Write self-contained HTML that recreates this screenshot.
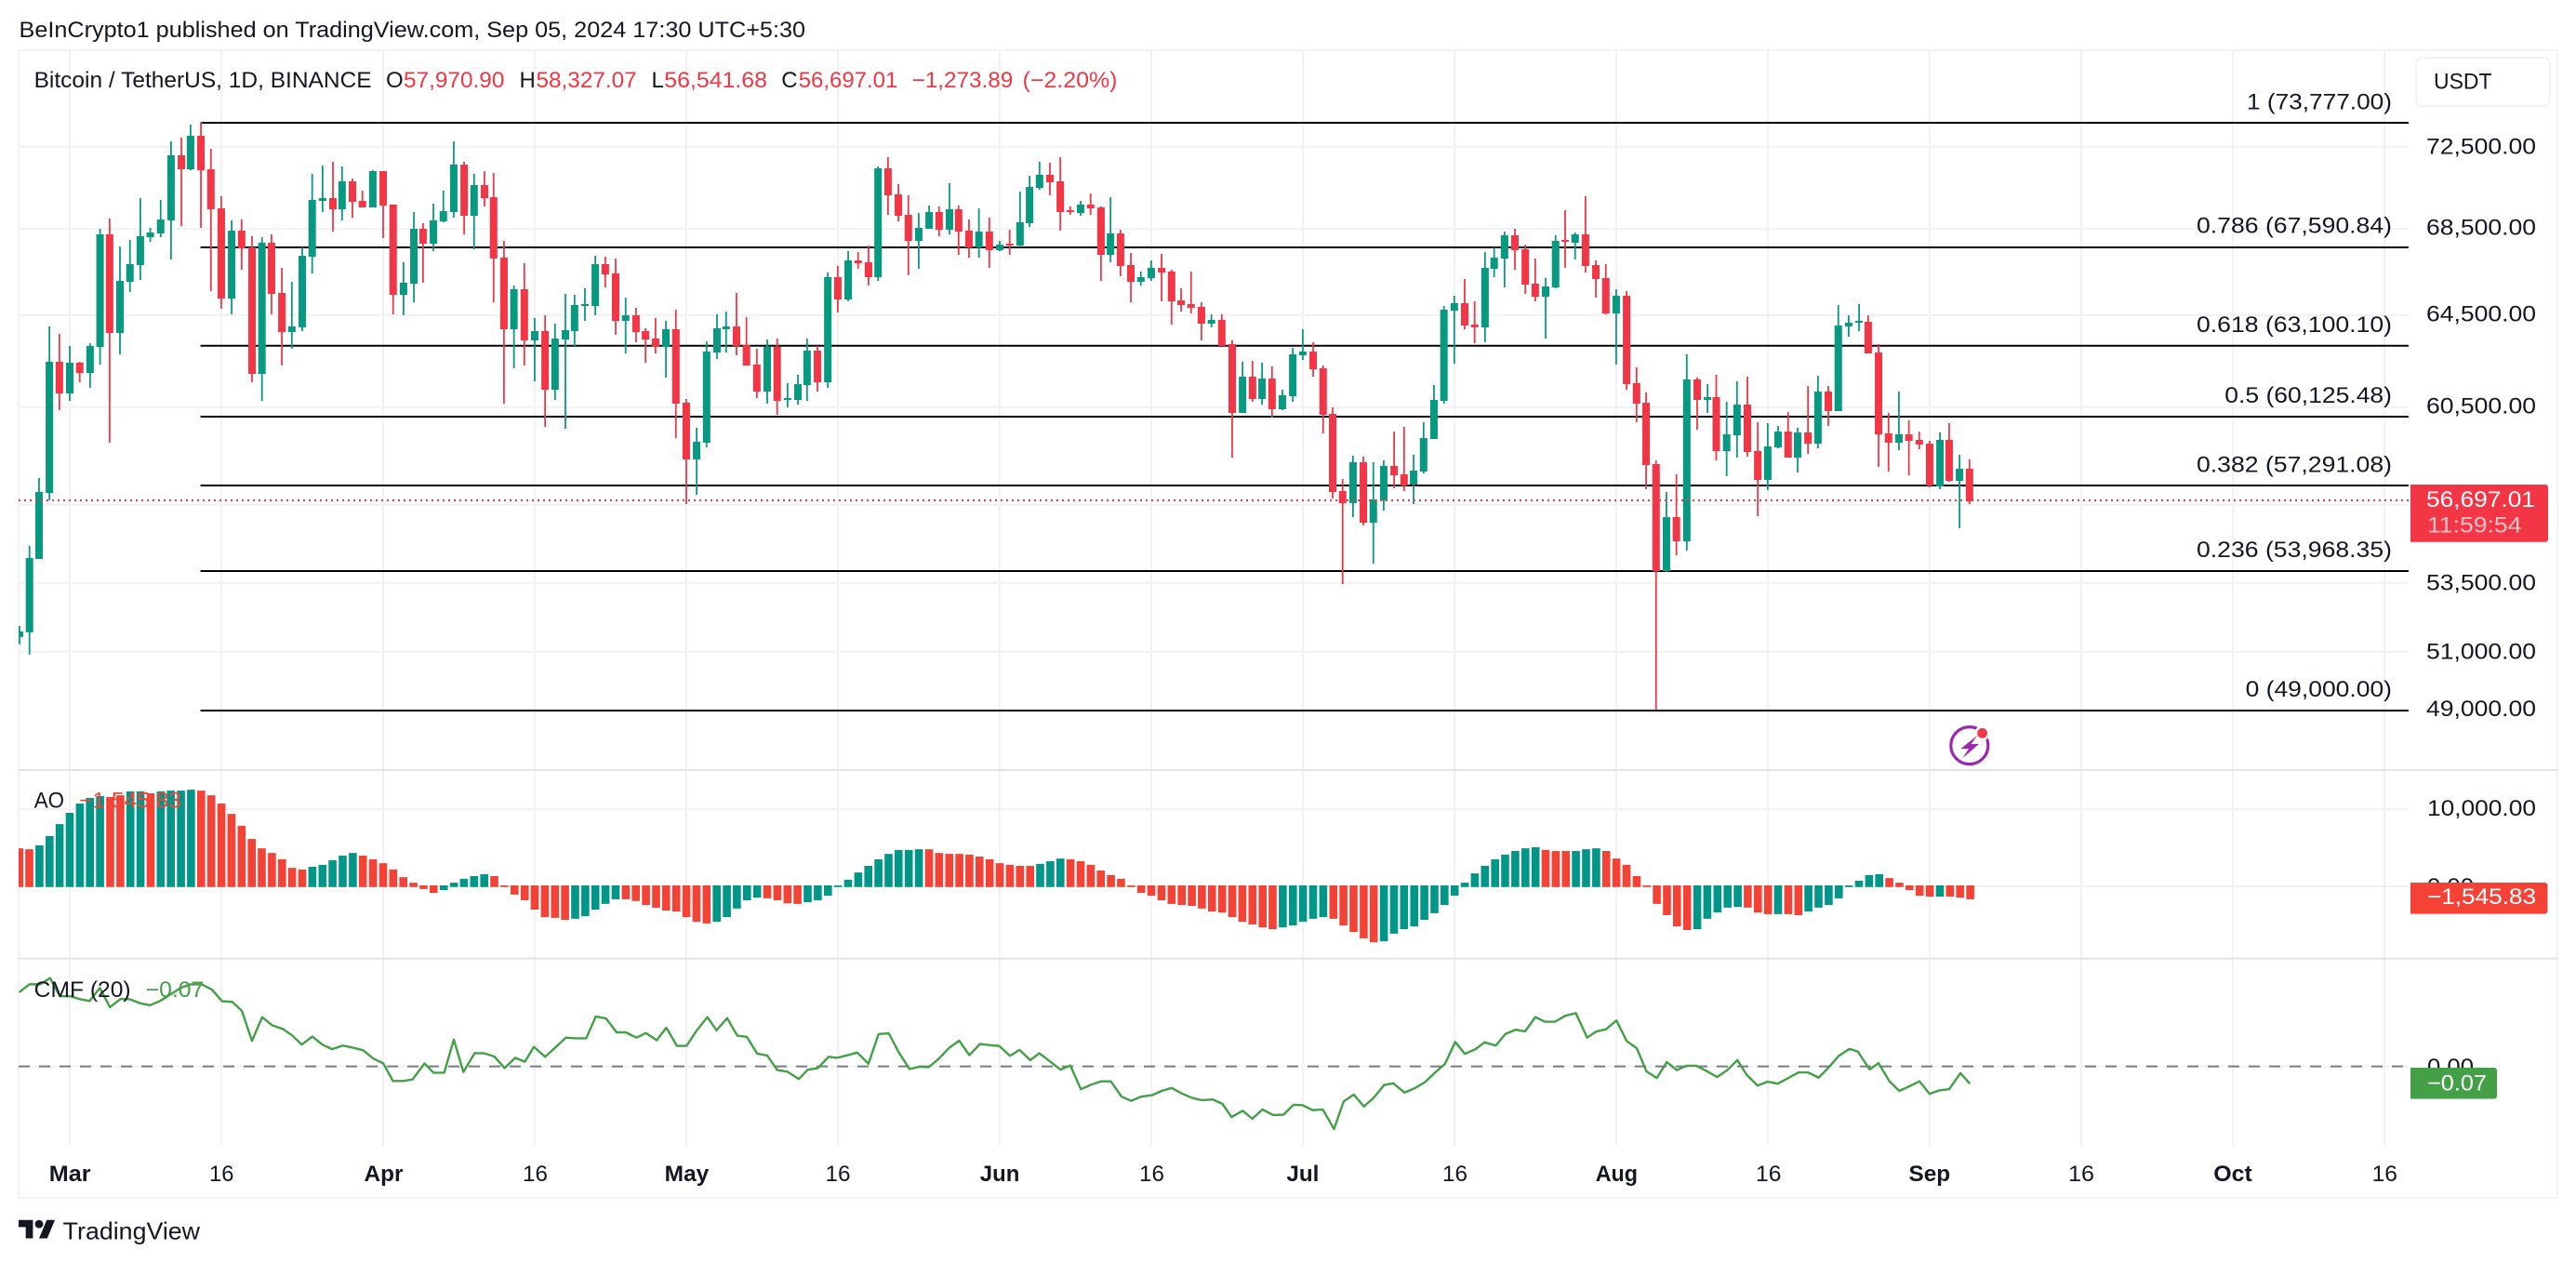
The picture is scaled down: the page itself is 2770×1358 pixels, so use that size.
<!DOCTYPE html>
<html lang="en"><head><meta charset="utf-8"><title>BTC/USDT chart</title>
<style>
html,body{margin:0;padding:0;background:#fff;width:2770px;height:1358px;overflow:hidden}
svg{display:block}
text{font-family:"Liberation Sans",sans-serif;fill:#131722;font-size:24px;white-space:pre}
.r{fill:#F23645}.b{font-weight:bold}
path:not([fill]),polyline{fill:none}
.gw{stroke:#089981;stroke-width:4}.gb{stroke:#089981;stroke-width:18}
.rw{stroke:#F23645;stroke-width:4}.rb{stroke:#F23645;stroke-width:18}
.cmf{stroke:#43A047;stroke-width:2.4;vector-effect:non-scaling-stroke;stroke-linejoin:round}
</style></head><body>
<svg xmlns="http://www.w3.org/2000/svg" width="2770" height="1358" viewBox="0 0 2770 1358">
<defs><clipPath id="c"><rect x="20" y="55" width="2570" height="1177"/></clipPath></defs>

<text x="20.5" y="40" textLength="845.5" lengthAdjust="spacingAndGlyphs">BeInCrypto1 published on TradingView.com, Sep 05, 2024 17:30 UTC+5:30</text>

<!-- grid -->
<path stroke="#F2F2F4" stroke-width="2" d="M75 55V1232M238 55V1232M412 55V1232M575 55V1232M738 55V1232M901 55V1232M1075 55V1232M1238 55V1232M1401 55V1232M1564 55V1232M1738 55V1232M1901 55V1232M2075 55V1232M2238 55V1232M2401 55V1232M2564 55V1232"/>
<path stroke="#F2F2F4" stroke-width="2" d="M20 157.7H2590M20 246H2590M20 339H2590M20 437.7H2590M20 542.7H2590M20 626.7H2590M20 700.7H2590M20 870H2590M20 953H2590M20 1146.6H2590"/>
<!-- frame -->
<rect x="20" y="54" width="2730" height="1234" fill="none" stroke="#F0F3FA" stroke-width="2"/>
<path stroke="#E0E3EB" stroke-width="2" d="M20 828H2750M20 1030.6H2750"/>

<!-- fib lines -->
<path stroke="#000" stroke-width="2" d="M215.6 132H2590M215.6 266H2590M215.6 371.7H2590M215.6 448H2590M215.6 522H2590M215.6 614H2590M215.6 764H2590"/>

<g clip-path="url(#c)">
<!-- candles block 1 -->
<g transform="scale(.4464,.3333)">
<path class="gw" d="M47 2019V2079M71 1761V2112M94 1542V1803M119 1053V1614M168 1116V1293M217 1107V1251M241 738V1176M289 795V1143M313 774V942M338 639V903M362 735V780M387 645V765M412 456V837M459 402V549M558 711V1014M631 765V1293M703 909V1125M728 798V1068M752 561V882M777 534V684M824 537V711M898 549V669M972 846V1017M997 684V975M1044 657V810M1068 615V717M1093 456V702M1142 561V804M1238 921V1188M1288 1026V1230M1337 1044V1290M1362 948V1383M1384 951V1119M1409 930V1035M1434 825V1017M1507 960V1140"/>
<path class="gb" d="M47 2037V2055M71 1800V2040M94 1587V1803M119 1167V1590M168 1170V1269M217 1116V1203M241 756V1119M289 906V1074M313 852V909M338 762V855M362 750V765M387 708V753M412 501V711M459 438V546M558 744V963M631 783V1206M703 1053V1071M728 825V1056M752 645V828M777 639V648M824 585V675M898 552V669M972 912V951M997 738V915M1044 711V786M1068 681V714M1093 531V684M1142 597V696M1238 933V1062M1288 1068V1098M1337 1092V1257M1362 1065V1095M1384 984V1068M1409 981V987M1434 852V987M1507 1017V1035"/>
<path class="rw" d="M143 1077V1323M192 1167V1233M264 705V1428M437 444V729M484 393V735M508 480V939M533 633V996M582 708V870M607 762V1233M654 756V1014M679 864V1179M802 522V747M849 576V702M873 615V669M923 552V768M947 660V1014M1019 720V912M1118 522V756M1167 552V666M1189 558V975M1214 777V1302M1263 849V1179M1313 1017V1377M1458 828V927M1483 834V1080M1532 993V1104M1555 1059V1170"/>
<path class="rb" d="M143 1167V1269M192 1170V1203M264 756V1074M437 501V546M484 438V549M508 546V675M533 672V963M582 744V801M607 798V1206M654 783V948M679 945V1071M802 639V675M849 585V651M873 648V669M923 552V663M947 660V951M1019 738V786M1118 531V696M1167 597V639M1189 636V834M1214 831V1062M1263 933V1098M1313 1068V1257M1458 852V885M1483 882V1035M1532 1017V1071M1555 1068V1095"/>
</g>
<!-- candles block 2 -->
<g transform="translate(700,100) scale(.4464,.3333)">
<path class="gw" d="M36 735V918M110 1080V1296M134 801V1143M159 714V858M181 705V837M280 795V1002M329 936V1014M354 909V1005M376 792V993M426 579V951M475 510V672M547 237V606M645 387V567M670 363V438M719 291V456M790 372V531M840 477V510M889 318V498M912 267V432M936 222V312M1035 348V396M1107 336V546M1180 576V621M1205 540V606M1350 714V756M1425 867V1032M1472 870V1005M1521 957V1023M1546 822V996"/>
<path class="gb" d="M36 762V819M110 1125V1182M134 834V1128M159 759V837M181 753V762M280 819V963M329 984V990M354 939V990M376 831V942M426 594V933M475 540V666M547 243V594M645 435V477M670 384V438M719 375V441M790 447V498M840 489V507M889 417V492M912 303V420M936 264V306M1035 360V387M1107 453V522M1180 594V609M1205 564V597M1350 732V744M1425 915V1032M1472 921V987M1521 975V1020M1546 843V978"/>
<path class="rw" d="M11 726V840M60 699V1113M85 987V1326M206 645V846M230 723V879M255 825V984M304 792V1038M401 816V963M450 558V708M499 513V567M524 492V621M571 207V393M596 294V414M620 330V588M694 366V462M741 363V522M766 408V531M815 402V564M864 441V522M961 225V330M986 207V444M1010 366V393M1059 324V393M1084 366V606M1131 441V591M1156 516V675M1230 519V672M1254 570V747M1277 630V705M1301 576V711M1326 675V798M1375 714V816M1400 798V1176M1449 864V996M1496 882V1047"/>
<path class="rb" d="M11 792V819M60 762V1002M85 999V1182M206 753V816M230 813V879M255 876V963M304 819V993M401 831V933M450 594V666M499 540V549M524 546V594M571 243V330M596 327V396M620 393V477M694 384V441M741 375V447M766 444V498M815 447V507M864 486V492M961 264V288M986 285V384M1010 378V384M1059 360V372M1084 369V522M1131 453V558M1156 555V609M1230 564V579M1254 576V672M1277 669V684M1301 681V693M1326 690V744M1375 732V816M1400 810V1032M1449 915V987M1496 921V1020"/>
</g>
<!-- candles block 3 -->
<g transform="translate(1400,150) scale(.4464,.3333)">
<path class="gw" d="M2 612V711M123 1020V1218M172 1041V1368M197 1035V1197M269 1017V1176M293 912V1077M318 792V966M342 537V852M367 504V723M441 363V654M463 348V444M488 297V477M587 447V642M611 309V480M658 300V387M757 483V726M878 1137V1395M927 693V1326M977 789V882M1023 846V1086M1048 780V1026M1122 915V1131M1147 924V996M1194 930V1074M1243 762V996M1292 534V876M1317 567V636M1342 531V618M1438 813V1002M1537 945V1128M1584 1017V1254"/>
<path class="gb" d="M2 684V696M123 1041V1173M172 1161V1236M197 1053V1164M269 1068V1113M293 963V1071M318 840V966M342 549V843M367 528V552M441 414V606M463 381V417M488 309V384M587 474V507M611 327V477M658 306V333M757 504V561M878 1218V1392M927 774V1296M977 831V840M1023 951V1005M1048 855V954M1122 990V1098M1147 942V993M1194 945V1026M1243 813V981M1292 600V876M1317 591V603M1342 585V591M1438 951V978M1537 969V1119M1584 1062V1101"/>
<path class="rw" d="M27 654V765M51 729V948M74 864V1158M98 1095V1434M148 1023V1245M222 942V1125M246 927V1134M392 450V612M416 522V657M513 288V420M538 339V498M562 384V522M634 228V414M683 183V429M708 390V510M732 402V564M782 489V807M806 735V912M829 816V1128M853 1035V1840M902 1080V1341M952 768V936M998 759V1035M1073 765V1023M1098 912V1215M1171 879V1026M1219 795V1014M1268 795V924M1364 567V690M1389 660V1056M1413 882V1071M1462 906V1083M1487 942V999M1512 972V1122M1559 915V1104M1608 1032V1176"/>
<path class="rb" d="M27 684V741M51 738V888M74 885V1137M98 1134V1173M148 1041V1236M222 1053V1083M246 1080V1116M392 528V600M416 597V606M513 309V357M538 354V468M562 465V507M634 324V330M683 306V408M708 405V450M732 447V561M782 504V789M806 786V852M829 849V1050M853 1047V1392M902 1218V1296M952 774V840M998 831V1005M1073 855V1008M1098 1005V1098M1171 942V1026M1219 945V981M1268 813V876M1364 588V690M1389 687V951M1413 948V978M1462 951V972M1487 969V984M1512 981V1116M1559 969V1101M1608 1062V1167"/>
</g>
<!-- AO bars: x real, y zoomed -->
<g transform="translate(0,800) scale(1,.3559)">
<path stroke="#009688" stroke-width="8.6" d="M42.4 432V306M53.3 432V278M64.1 432V242M75 432V208M85.9 432V180M96.7 432V163M107.6 432V157M140.2 432V143M151.1 432V143M172.8 432V143M183.7 432V141M194.6 432V141M205.4 432V138M335.9 432V371M346.8 432V365M357.6 432V351M368.5 432V337M379.4 432V329M477.2 427V441M488.1 432V419M498.9 432V407M509.8 432V399M520.7 432V393M618.5 427V528M629.4 427V520M640.2 427V500M651.1 427V483M662 427V469M770.7 427V537M781.6 427V523M792.4 427V497M803.3 427V472M814.2 427V464M868.5 427V478M879.4 427V472M890.3 427V458M901.1 432V427M912 432V410M922.9 432V388M933.7 432V368M944.6 432V348M955.5 432V332M966.3 432V320M977.2 432V320M988.1 432V318M1118.5 432V362M1129.4 432V354M1140.3 432V346M1379.4 427V554M1390.3 427V548M1401.1 427V537M1412 427V528M1422.9 427V523M1488.1 427V596M1499 427V573M1509.8 427V559M1520.7 427V551M1531.6 427V531M1542.5 427V511M1553.3 427V486M1564.2 427V458M1575.1 432V419M1585.9 432V391M1596.8 432V368M1607.7 432V348M1618.5 432V334M1629.4 432V323M1640.3 432V315M1651.2 432V312M1694.6 432V323M1705.5 432V318M1716.4 432V315M1825.1 427V559M1835.9 427V528M1846.8 427V509M1857.7 427V494M1868.6 427V492M1912 427V514M1944.6 427V506M1955.5 427V494M1966.4 427V486M1977.3 427V466M1988.1 432V427M1999 432V413M2009.9 432V396M2020.7 432V393M2086 427V461"/>
<path stroke="#F44336" stroke-width="8.6" d="M20.7 432V315M31.5 432V318M118.5 432V160M129.4 432V155M162 432V149M216.3 432V141M227.2 432V155M238.1 432V180M248.9 432V211M259.8 432V247M270.7 432V287M281.5 432V315M292.4 432V329M303.3 432V348M314.1 432V374M325 432V379M390.2 432V337M401.1 432V348M412 432V360M422.8 432V379M433.7 432V402M444.6 432V419M455.5 427V438M466.3 427V450M531.5 432V399M542.4 432V427M553.3 427V455M564.2 427V472M575 427V500M585.9 427V523M596.8 427V525M607.6 427V531M672.9 427V469M683.7 427V474M694.6 427V486M705.5 427V495M716.3 427V503M727.2 427V506M738.1 427V523M748.9 427V537M759.8 427V542M825 427V466M835.9 427V472M846.8 427V481M857.6 427V483M999 432V318M1009.8 432V329M1020.7 432V332M1031.6 432V332M1042.4 432V334M1053.3 432V340M1064.2 432V348M1075 432V360M1085.9 432V365M1096.8 432V368M1107.7 432V368M1151.1 432V348M1162 432V354M1172.9 432V365M1183.7 432V382M1194.6 432V396M1205.5 432V407M1216.4 432V427M1227.2 427V450M1238.1 427V458M1249 427V472M1259.8 427V483M1270.7 427V486M1281.6 427V489M1292.4 427V497M1303.3 427V506M1314.2 427V509M1325.1 427V523M1335.9 427V537M1346.8 427V545M1357.7 427V554M1368.5 427V559M1433.8 427V528M1444.6 427V548M1455.5 427V568M1466.4 427V587M1477.2 427V599M1662 432V320M1672.9 432V323M1683.8 432V323M1727.2 432V323M1738.1 432V346M1749 432V365M1759.9 432V399M1770.7 432V427M1781.6 427V483M1792.5 427V517M1803.3 427V551M1814.2 427V562M1879.4 427V494M1890.3 427V509M1901.2 427V514M1922.9 427V514M1933.8 427V517M2031.6 432V405M2042.5 432V419M2053.3 427V441M2064.2 427V458M2075.1 427V461M2096.8 427V461M2107.7 427V464M2118.6 427V469"/>
</g>
</g>

<!-- price dotted line -->
<path stroke="#F23645" stroke-width="2" stroke-dasharray="2 4" d="M20 538H2592"/>

<!-- CMF -->
<path stroke="#787B86" stroke-width="2" stroke-dasharray="12 10" d="M20 1146.6H2590"/>
<polyline class="cmf" transform="translate(0,800) scale(.5741,.3559)" points="36,750 55,726 75,726 94,707 112,762 132,762 150,771 168,776 187,737 206,795 226,770 243,771 262,783 281,789 300,776 319,757 338,737 357,726 378,726 397,742 416,777 435,779 453,806 472,897 491,825 510,850 530,861 547,880 565,908 585,884 604,908 622,922 642,911 660,917 680,925 699,950 718,965 736,1018 755,1018 773,1013 795,965 812,993 832,993 850,893 868,991 889,934 906,934 926,944 945,979 965,948 983,960 1000,915 1021,945 1040,917 1060,887 1078,889 1098,889 1116,823 1135,829 1155,871 1172,871 1192,887 1210,873 1230,895 1248,857 1268,912 1286,912 1305,865 1325,825 1342,865 1362,828 1381,881 1399,885 1418,935 1437,941 1456,985 1475,990 1496,1012 1513,984 1532,979 1552,945 1568,948"/>
<polyline class="cmf" transform="translate(900,800) scale(.5741,.3559)" points="0,948 20,940 38,932 59,966 78,876 97,874 116,932 136,982 154,975 172,976 190,952 210,918 229,896 248,940 268,906 287,910 304,912 324,942 342,924 362,955 379,934 400,960 419,984 437,971 457,1043 476,1029 495,1019 513,1019 533,1065 551,1078 570,1065 590,1061 608,1048 627,1039 646,1056 665,1069 683,1076 704,1074 722,1087 739,1127 760,1108 778,1132 797,1104 817,1121 836,1120 855,1090 872,1091 891,1106 910,1104 931,1163 949,1080 968,1059 987,1095 1005,1069 1025,1030 1042,1025 1063,1053 1082,1040 1101,1022 1120,993 1139,966 1158,900 1176,936 1196,922 1213,901 1234,911 1252,876 1271,863 1289,868 1308,825 1326,839 1345,839 1364,821 1384,813 1405,887 1423,868 1440,862 1460,835 1479,897 1498,919 1516,988"/>
<polyline class="cmf" transform="translate(1770,800) scale(.6378,.3559)" points="0,988 18,1009 35,961 52,985 68,972 85,972 103,989 120,1006 137,985 154,955 170,1000 188,1032 205,1020 222,1026 240,1009 257,992 273,992 291,1008 308,977 325,942 343,921 357,929 377,983 392,964 410,1018 427,1048 444,1034 461,1019 478,1057 495,1046 511,1043 530,994 546,1026"/>

<!-- legend -->
<text x="36.6" y="94" textLength="363" lengthAdjust="spacingAndGlyphs">Bitcoin / TetherUS, 1D, BINANCE</text>
<text x="415" y="94">O</text>
<text class="r" x="434" y="94" textLength="108.4" lengthAdjust="spacingAndGlyphs">57,970.90</text>
<text x="558.5" y="94">H</text>
<text class="r" x="576.5" y="94" textLength="108.2" lengthAdjust="spacingAndGlyphs">58,327.07</text>
<text x="700.5" y="94">L</text>
<text class="r" x="714.3" y="94" textLength="110.7" lengthAdjust="spacingAndGlyphs">56,541.68</text>
<text x="840.3" y="94">C</text>
<text class="r" x="858.7" y="94" textLength="106.6" lengthAdjust="spacingAndGlyphs">56,697.01</text>
<text class="r" x="980.6" y="94" textLength="108.7" lengthAdjust="spacingAndGlyphs">−1,273.89</text>
<text class="r" x="1099.5" y="94" textLength="102" lengthAdjust="spacingAndGlyphs">(−2.20%)</text>

<!-- fib labels -->
<text x="2416" y="117.5" textLength="156" lengthAdjust="spacingAndGlyphs">1 (73,777.00)</text>
<text x="2362" y="250.7" textLength="210" lengthAdjust="spacingAndGlyphs">0.786 (67,590.84)</text>
<text x="2362" y="357" textLength="210" lengthAdjust="spacingAndGlyphs">0.618 (63,100.10)</text>
<text x="2392.3" y="433" textLength="179.7" lengthAdjust="spacingAndGlyphs">0.5 (60,125.48)</text>
<text x="2362" y="507.3" textLength="210" lengthAdjust="spacingAndGlyphs">0.382 (57,291.08)</text>
<text x="2362" y="599" textLength="210" lengthAdjust="spacingAndGlyphs">0.236 (53,968.35)</text>
<text x="2414.6" y="749" textLength="157.4" lengthAdjust="spacingAndGlyphs">0 (49,000.00)</text>

<!-- lightning icon -->
<circle cx="2117.8" cy="801.6" r="20" fill="none" stroke="#9C27B0" stroke-width="3.2"/>
<circle cx="2131.6" cy="788.3" r="8" fill="#fff"/>
<circle cx="2131.6" cy="788.3" r="5.4" fill="#F23645"/>
<path fill="#9C27B0" d="M2126.5 790.5L2108.5 805H2117L2110.5 815L2128 800H2119.5Z"/>

<!-- price axis -->
<rect x="2598" y="62" width="144" height="52" rx="7" fill="#fff" stroke="#F0F3FA" stroke-width="2"/>
<text x="2617" y="95.7" textLength="62.5" lengthAdjust="spacingAndGlyphs">USDT</text>
<text x="2609" y="165.7" textLength="118" lengthAdjust="spacingAndGlyphs">72,500.00</text>
<text x="2609" y="252.3" textLength="118" lengthAdjust="spacingAndGlyphs">68,500.00</text>
<text x="2609" y="345.3" textLength="118" lengthAdjust="spacingAndGlyphs">64,500.00</text>
<text x="2609" y="444.7" textLength="118" lengthAdjust="spacingAndGlyphs">60,500.00</text>
<text x="2609" y="634.3" textLength="118" lengthAdjust="spacingAndGlyphs">53,500.00</text>
<text x="2609" y="708.3" textLength="118" lengthAdjust="spacingAndGlyphs">51,000.00</text>
<text x="2609" y="770" textLength="118" lengthAdjust="spacingAndGlyphs">49,000.00</text>
<text x="2610" y="877" textLength="117" lengthAdjust="spacingAndGlyphs">10,000.00</text>
<text x="2610" y="961" textLength="50" lengthAdjust="spacingAndGlyphs">0.00</text>
<text x="2610" y="1155" textLength="50" lengthAdjust="spacingAndGlyphs">0.00</text>

<path fill="#F23645" d="M2592 521H2737a3 3 0 0 1 3 3V579.7a3 3 0 0 1-3 3H2592Z"/>
<text style="fill:#fff" x="2609" y="545" textLength="117" lengthAdjust="spacingAndGlyphs">56,697.01</text>
<text style="fill:#fff;fill-opacity:.7" x="2610" y="572.7" textLength="101.5" lengthAdjust="spacingAndGlyphs">11:59:54</text>

<path fill="#F44336" d="M2592 949H2736.4a3 3 0 0 1 3 3V979.6a3 3 0 0 1-3 3H2592Z"/>
<text style="fill:#fff" x="2610" y="972" textLength="117" lengthAdjust="spacingAndGlyphs">−1,545.83</text>
<path fill="#43A047" d="M2592 1148H2682a3 3 0 0 1 3 3V1178.5a3 3 0 0 1-3 3H2592Z"/>
<text style="fill:#fff" x="2610" y="1172.6" textLength="64" lengthAdjust="spacingAndGlyphs">−0.07</text>

<!-- indicator legends -->
<text x="36.7" y="868.3" textLength="32.3" lengthAdjust="spacingAndGlyphs">AO</text>
<text style="fill:#F44336" x="85" y="868.3" textLength="110" lengthAdjust="spacingAndGlyphs">−1,545.83</text>
<text x="36.7" y="1072" textLength="103.9" lengthAdjust="spacingAndGlyphs">CMF (20)</text>
<text style="fill:#43A047" x="156.7" y="1072" textLength="62.6" lengthAdjust="spacingAndGlyphs">−0.07</text>

<!-- time axis -->
<g>
<text class="b" x="52.8" y="1270" textLength="44.8" lengthAdjust="spacingAndGlyphs">Mar</text>
<text x="225" y="1270" textLength="26.4" lengthAdjust="spacingAndGlyphs">16</text>
<text class="b" x="391.5" y="1270" textLength="42" lengthAdjust="spacingAndGlyphs">Apr</text>
<text x="562" y="1270" textLength="27" lengthAdjust="spacingAndGlyphs">16</text>
<text class="b" x="714.7" y="1270" textLength="47.6" lengthAdjust="spacingAndGlyphs">May</text>
<text x="887.5" y="1270" textLength="27" lengthAdjust="spacingAndGlyphs">16</text>
<text class="b" x="1053.8" y="1270" textLength="42.5" lengthAdjust="spacingAndGlyphs">Jun</text>
<text x="1225" y="1270" textLength="27" lengthAdjust="spacingAndGlyphs">16</text>
<text class="b" x="1383.4" y="1270" textLength="35" lengthAdjust="spacingAndGlyphs">Jul</text>
<text x="1551" y="1270" textLength="27" lengthAdjust="spacingAndGlyphs">16</text>
<text class="b" x="1715.7" y="1270" textLength="45.3" lengthAdjust="spacingAndGlyphs">Aug</text>
<text x="1888" y="1270" textLength="27.4" lengthAdjust="spacingAndGlyphs">16</text>
<text class="b" x="2052.5" y="1270" textLength="44.6" lengthAdjust="spacingAndGlyphs">Sep</text>
<text x="2224" y="1270" textLength="28" lengthAdjust="spacingAndGlyphs">16</text>
<text class="b" x="2380.3" y="1270" textLength="41.5" lengthAdjust="spacingAndGlyphs">Oct</text>
<text x="2550.6" y="1270" textLength="27.4" lengthAdjust="spacingAndGlyphs">16</text>
</g>

<!-- footer logo -->
<g transform="translate(20,1307.3) scale(1.1)" fill="#131722">
<path fill="#131722" d="M14 22H7V11H0V4h14v18zM28 22h-8l7.5-18h8L28 22z"/>
<circle cx="20" cy="8" r="4"/>
</g>
<text x="67.7" y="1332.7" style="font-size:26px" textLength="147.3" lengthAdjust="spacingAndGlyphs">TradingView</text>
</svg>
</body></html>
